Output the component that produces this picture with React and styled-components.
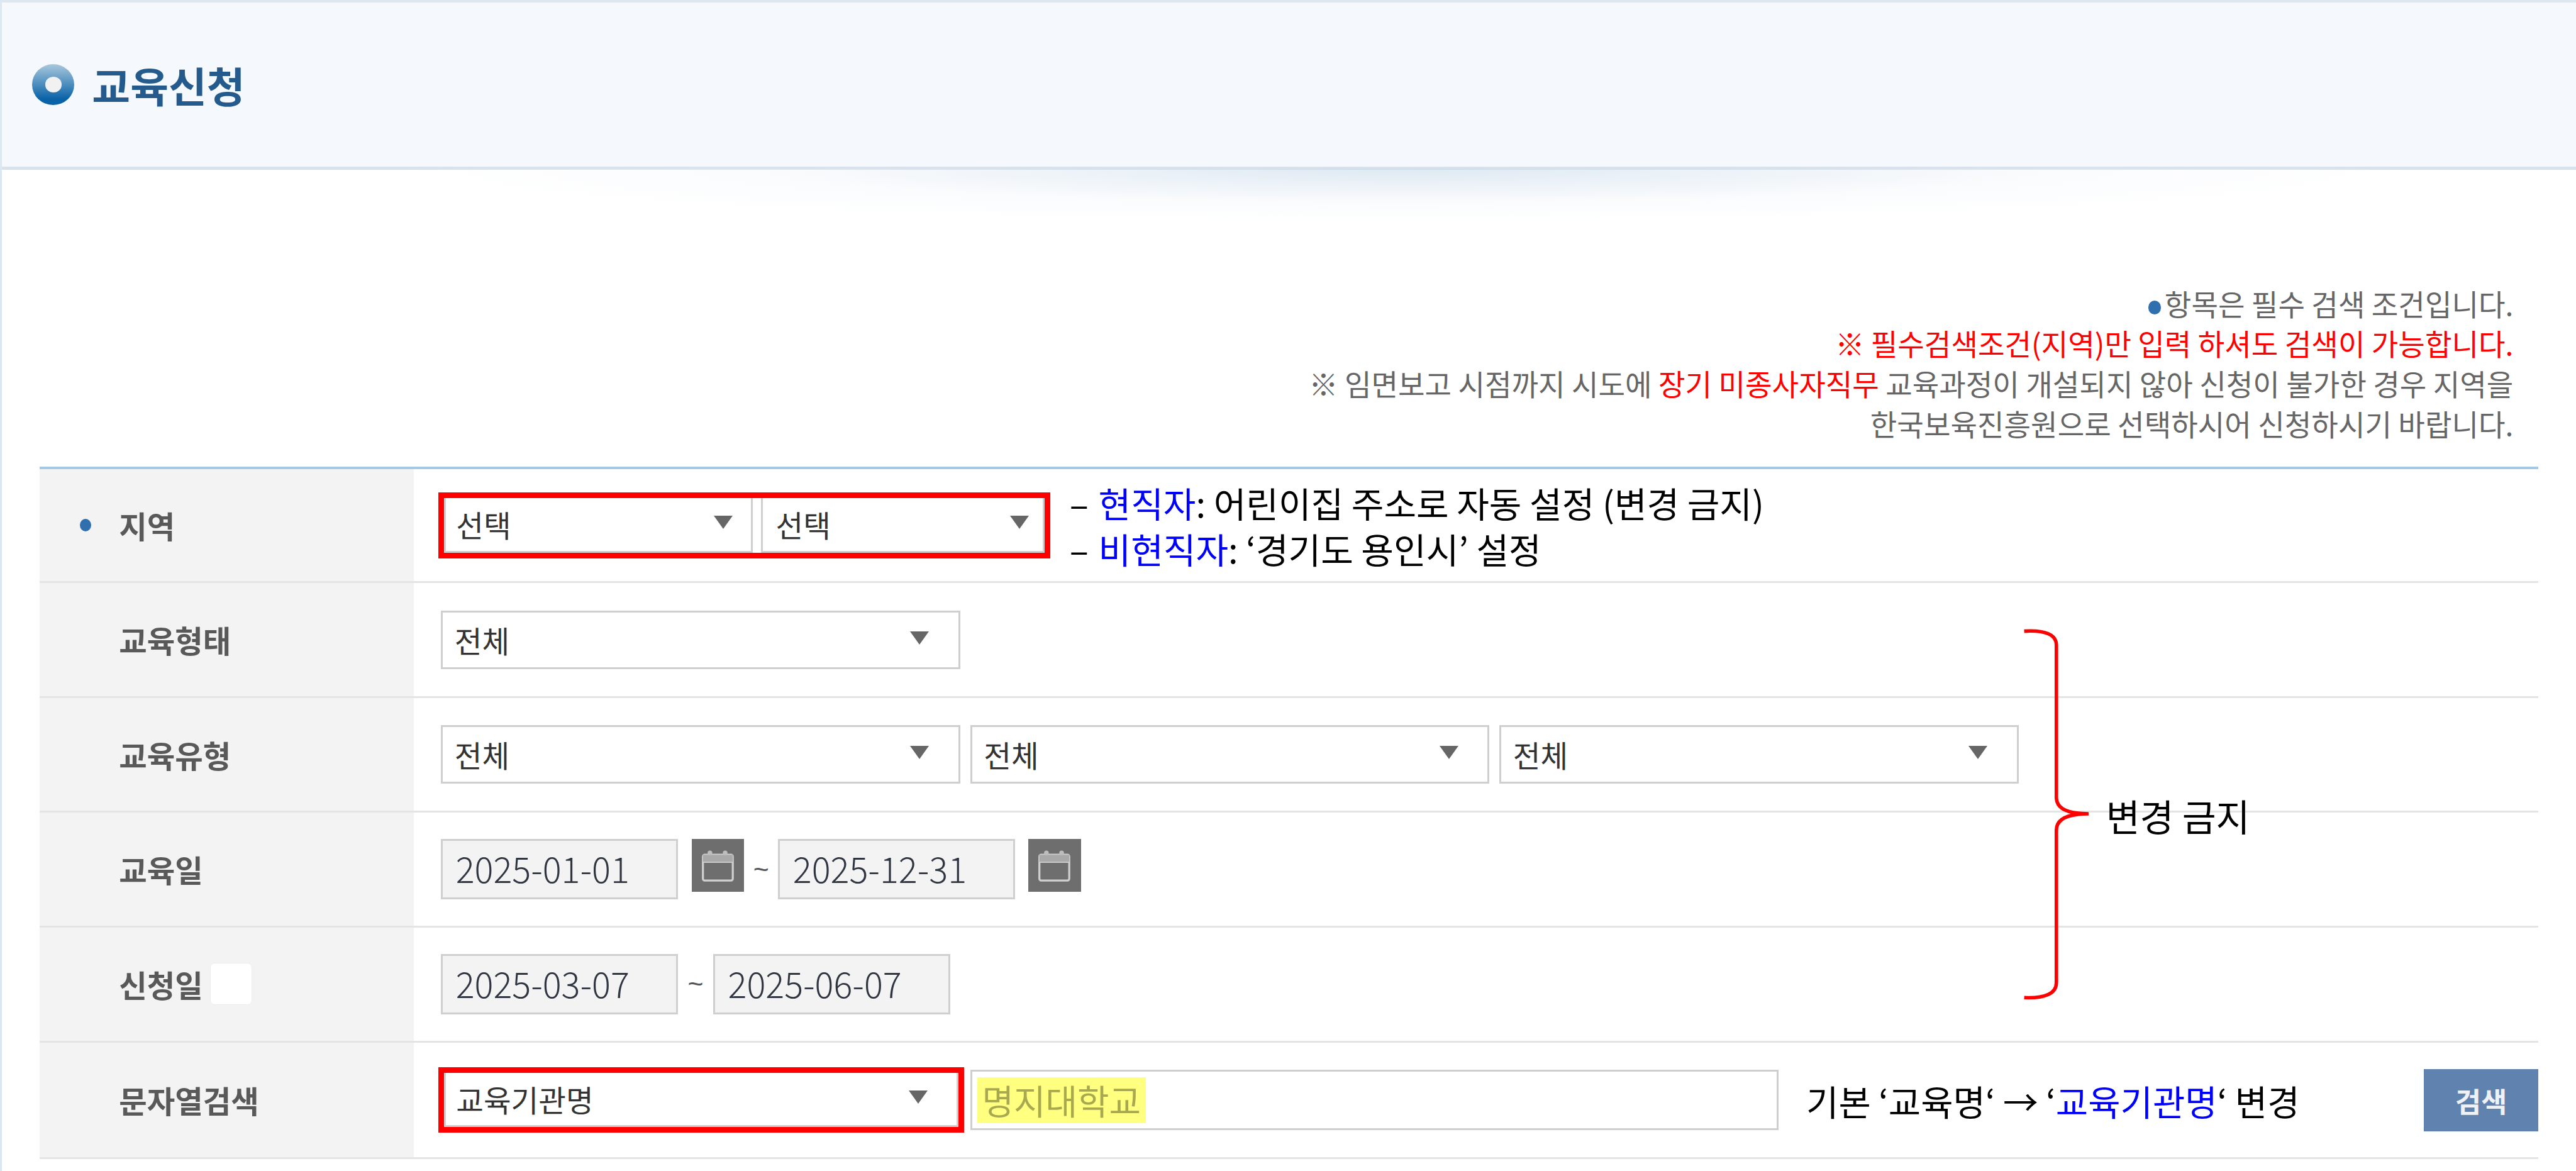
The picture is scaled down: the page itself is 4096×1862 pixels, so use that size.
import React from 'react';
import styled, { createGlobalStyle } from 'styled-components';

const KR = `"Noto Sans CJK KR", "Noto Sans", sans-serif`;

// everything below is measured on the 4400x2000 reference, the root zoom brings it to the window
const GlobalStyle = createGlobalStyle`
  html, body { margin: 0; padding: 0; background: #fff; overflow: hidden; }
  #root { zoom: 0.93091; }
  * { box-sizing: border-box; }
`;

const Page = styled.div`
  width: 4400px;
  height: 2000px;
  border-left: 4px solid #dbe7f1;
  font-family: ${KR};
  overflow: hidden;
`;

const Header = styled.header`
  position: relative;
  height: 290px;
  margin-left: -4px;
  display: flex;
  align-items: center;
  gap: 30px;
  padding: 0 0 0 56px;
  background: #f5f9fd;
  border-top: 5px solid #dce7f1;
  border-bottom: 6px solid #d6e3ee;
  &::after {
    content: '';
    position: absolute;
    left: 700px;
    right: 300px;
    top: 284px;
    height: 90px;
    background: radial-gradient(ellipse at 50% 0, rgba(195, 215, 232, 0.55), rgba(235, 240, 247, 0.25) 45%, rgba(255, 255, 255, 0) 72%);
  }
`;

const TitleBullet = styled.span`
  width: 72px;
  height: 70px;
  border-radius: 50%;
  display: flex;
  align-items: center;
  justify-content: center;
  background: linear-gradient(#a9c8dc, #0a63a8 85%);
  &::before {
    content: '';
    width: 28px;
    height: 26px;
    border-radius: 50%;
    background: #f1f1f1;
  }
`;

const Title = styled.h1`
  margin: 0;
  font-size: 71px;
  font-weight: 700;
  line-height: 1;
  color: #245a8c;
`;

const Notes = styled.div`
  margin-top: 193px;
  padding-right: 107px;
  text-align: right;
  font-size: 49.7px;
  line-height: 68.5px;
  color: #666;
`;

const Red = styled.span`
  color: #f00;
`;

const Dot = styled.i`
  display: inline-block;
  width: ${(p) => p.$w}px;
  height: ${(p) => p.$h}px;
  margin-right: ${(p) => p.$gap}px;
  border-radius: 50%;
  background: #2f6fae;
  vertical-align: middle;
`;

const Table = styled.div`
  position: relative;
  margin: 40px 64px 0 64px;
  border-top: 5px solid #a3c8e8;
`;

const Row = styled.div`
  display: flex;
  height: ${(p) => p.$h}px;
  border-bottom: 4px solid #e4e4e4;
`;

const Label = styled.div`
  flex: 0 0 640px;
  display: flex;
  align-items: center;
  padding-left: ${(p) => (p.$required ? 69 : 136)}px;
  background: #f3f3f3;
  font-size: 52px;
  font-weight: 700;
  color: #595959;
`;

const WhiteBox = styled.span`
  width: 72px;
  height: 72px;
  margin-left: 12px;
  background: #fff;
  border: 2px solid #ececec;
  border-radius: 8px;
`;

const Cell = styled.div`
  flex: 1;
  display: flex;
  align-items: center;
  padding-left: 46px;
`;

const RedBox = styled.div`
  display: flex;
  margin-left: -5px;
  height: ${(p) => p.$h}px;
  width: ${(p) => p.$w}px;
  border: 10px solid #f00;
`;

const Select = styled.div`
  flex: ${(p) => (p.$w ? `0 0 ${p.$w}px` : 1)};
  height: ${(p) => (p.$boxed ? 'auto' : '100px')};
  margin-right: ${(p) => p.$mr || 0}px;
  display: flex;
  align-items: center;
  justify-content: space-between;
  padding: 0 ${(p) => p.$pr || 50}px 0 ${(p) => p.$pl || 20}px;
  background: #fff;
  border: 4px solid #cfcfcf;
  ${(p) => p.$boxed && 'border-top: 0;'}
  font-size: 51px;
  color: #333;
`;

const Caret = styled.span`
  width: 0;
  height: 0;
  margin-top: -6px;
  border-left: 17px solid transparent;
  border-right: 17px solid transparent;
  border-top: 23px solid #666;
`;

const Notice = styled.div`
  margin-left: ${(p) => p.$ml}px;
  font-size: ${(p) => p.$size}px;
  line-height: 79px;
  color: #000;
  white-space: nowrap;
`;

const Dash = styled.span`
  display: inline-block;
  width: 40px;
  margin-right: 13px;
  text-align: center;
`;

const Blue = styled.span`
  color: #00f;
`;

const DateInput = styled.div`
  flex: 0 0 405px;
  height: 103px;
  display: flex;
  align-items: center;
  padding: 0 0 6px 22px;
  background: #f3f3f3;
  border: 4px solid #cfcfcf;
  font-size: 60px;
  font-weight: 300;
  color: #2f3642;
`;

const CalendarButton = styled.span`
  flex: 0 0 90px;
  height: 90px;
  margin-left: ${(p) => p.$ml}px;
  margin-bottom: 13px;
  background: #6e6e6e;
  & svg {
    display: block;
  }
`;

const Tilde = styled.span`
  flex: 0 0 ${(p) => p.$w}px;
  text-align: center;
  font-family: 'Liberation Sans', sans-serif;
  font-size: 46px;
  color: #555;
`;

const TextInput = styled.div`
  flex: 0 0 1381px;
  height: 103px;
  margin-left: 10px;
  display: flex;
  align-items: center;
  padding-left: 9px;
  background: #fff;
  border: 4px solid #cfcfcf;
`;

const Highlight = styled.span`
  padding: 0 8px;
  height: 78px;
  line-height: 76px;
  font-size: 59px;
  background: #ffff80;
  color: #a8a850;
`;

const SearchButton = styled.button`
  width: 196px;
  height: 106px;
  margin-left: auto;
  border: 0;
  background: #5f83ae;
  color: #eef1f5;
  font-family: ${KR};
  font-size: 48px;
  font-weight: 700;
`;

const BraceNote = styled.div`
  position: absolute;
  left: 3384px;
  top: 271px;
  display: flex;
  align-items: center;
`;

const BraceText = styled.span`
  margin-left: 16px;
  font-size: 63px;
  color: #000;
  white-space: nowrap;
`;

const Calendar = () => (
  <svg width="90" height="90" viewBox="0 0 90 90" fill="none" stroke="#cfcfcf" strokeWidth="3.5">
    <rect x="19" y="27" width="51" height="44" rx="3" />
    <path d="M19 39H70" />
    <path d="M19 27h51v12H19z" fill="#a9a9a9" stroke="none" />
    <circle cx="31" cy="24" r="4" fill="#bdbdbd" stroke="none" />
    <circle cx="57" cy="24" r="4" fill="#bdbdbd" stroke="none" />
  </svg>
);

const Brace = () => (
  <svg width="130" height="640" viewBox="0 0 130 640" fill="none" stroke="#f00" strokeWidth="6">
    <path d="M6 6Q61 3 61 30V290Q61 318 116 318Q61 318 61 346V606Q61 634 6 632" />
  </svg>
);

export default function App() {
  return (
    <Page>
      <GlobalStyle />
      <Header>
        <TitleBullet />
        <Title>교육신청</Title>
      </Header>
      <Notes>
        <div><Dot $w={22} $h={23} $gap={6} />항목은 필수 검색 조건입니다.</div>
        <div><Red>※ 필수검색조건(지역)만 입력 하셔도 검색이 가능합니다.</Red></div>
        <div>※ 임면보고 시점까지 시도에 <Red>장기 미종사자직무</Red> 교육과정이 개설되지 않아 신청이 불가한 경우 지역을</div>
        <div>한국보육진흥원으로 선택하시어 신청하시기 바랍니다.</div>
      </Notes>
      <Table>
        <Row $h={195}>
          <Label $required><Dot $w={20} $h={22} $gap={47} />지역</Label>
          <Cell>
            <RedBox $w={1046} $h={113}>
              <Select $boxed $w={528} $pl={18} $pr={31} $mr={14}>선택<Caret /></Select>
              <Select $boxed $pl={22} $pr={24}>선택<Caret /></Select>
            </RedBox>
            <Notice $ml={29} $size={60.3}>
              <div><Dash>–</Dash><Blue>현직자</Blue>: 어린이집 주소로 자동 설정 (변경 금지)</div>
              <div><Dash>–</Dash><Blue>비현직자</Blue>: ‘경기도 용인시’ 설정</div>
            </Notice>
          </Cell>
        </Row>
        <Row $h={196}>
          <Label>교육형태</Label>
          <Cell><Select $w={887}>전체<Caret /></Select></Cell>
        </Row>
        <Row $h={196}>
          <Label>교육유형</Label>
          <Cell>
            <Select $w={887} $mr={17}>전체<Caret /></Select>
            <Select $w={887} $mr={17}>전체<Caret /></Select>
            <Select $w={887}>전체<Caret /></Select>
          </Cell>
        </Row>
        <Row $h={196}>
          <Label>교육일</Label>
          <Cell>
            <DateInput>2025-01-01</DateInput>
            <CalendarButton $ml={23}><Calendar /></CalendarButton>
            <Tilde $w={58}>~</Tilde>
            <DateInput>2025-12-31</DateInput>
            <CalendarButton $ml={22}><Calendar /></CalendarButton>
          </Cell>
        </Row>
        <Row $h={197}>
          <Label>신청일<WhiteBox /></Label>
          <Cell>
            <DateInput>2025-03-07</DateInput>
            <Tilde $w={60}>~</Tilde>
            <DateInput>2025-06-07</DateInput>
          </Cell>
        </Row>
        <Row $h={199}>
          <Label>문자열검색</Label>
          <Cell>
            <RedBox $w={899} $h={112}>
              <Select $boxed $pl={18}>교육기관명<Caret /></Select>
            </RedBox>
            <TextInput><Highlight>명지대학교</Highlight></TextInput>
            <Notice $ml={47} $size={60}>기본 ‘교육명‘ → ‘<Blue>교육기관명</Blue>‘ 변경</Notice>
            <SearchButton>검색</SearchButton>
          </Cell>
        </Row>
        <BraceNote>
          <Brace />
          <BraceText>변경 금지</BraceText>
        </BraceNote>
      </Table>
    </Page>
  );
}
